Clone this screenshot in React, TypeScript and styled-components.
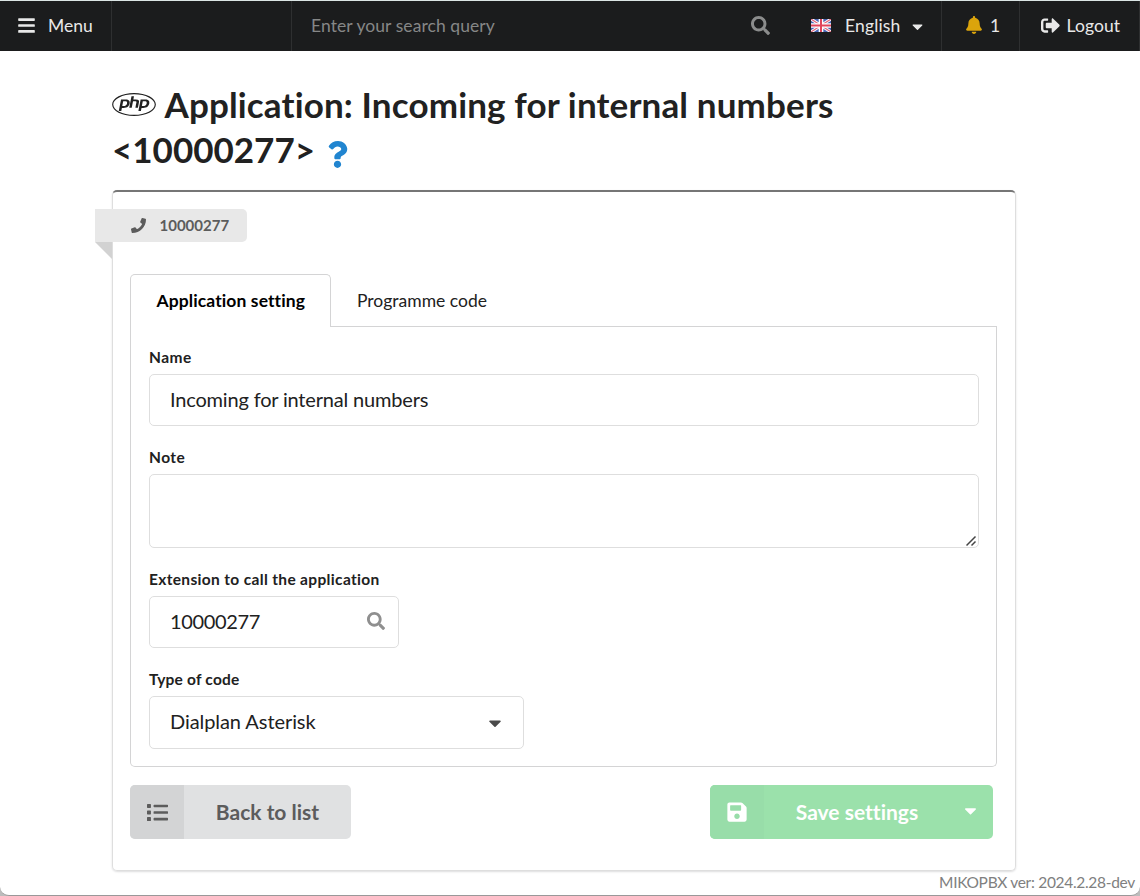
import React from "react";
import styled, { createGlobalStyle } from "styled-components";
import {
  FaBars,
  FaSearch,
  FaCaretDown,
  FaBell,
  FaSignOutAlt,
  FaPhp,
  FaQuestion,
  FaPhone,
  FaList,
  FaSave,
} from "react-icons/fa";

const GlobalStyle = createGlobalStyle`
  *, *::before, *::after { box-sizing: border-box; }
  html, body { margin: 0; padding: 0; background: #bcbcbc; }
  body {
    font-family: Lato, "Liberation Sans", sans-serif;
    font-size: 17.5px;
    font-variant-ligatures: none;
    color: #212121;
    overflow: hidden;
  }
  input, textarea, button { font-family: inherit; font-variant-ligatures: none; }
`;

const Page = styled.div`
  width: 1140px;
  height: 896px;
  background: #fff;
  border-top: 1px solid #dbe5e4;
  border-bottom: 1px solid #9a9899;
  border-radius: 0 0 9px 9px;
  display: flex;
  flex-direction: column;
  overflow: hidden;
`;

const TopBar = styled.header`
  display: flex;
  flex: 0 0 50px;
  background: #1b1c1d;
  color: #e8e8e8;
`;

const BarItem = styled.div<{ $width: number; $divider?: boolean; $left?: number }>`
  width: ${(p) => p.$width}px;
  padding-left: ${(p) => p.$left ?? 0}px;
  padding-bottom: 2px;
  display: flex;
  align-items: center;
  white-space: nowrap;
  border-right: ${(p) => (p.$divider ? "1px solid #2e2f30" : "0")};
`;

const BarText = styled.span<{ $left: number; $spacing?: number }>`
  margin-left: ${(p) => p.$left}px;
  letter-spacing: ${(p) => p.$spacing ?? 0}px;
`;

const SearchInput = styled.input`
  width: 439.5px;
  padding: 0;
  border: 0;
  outline: 0;
  background: transparent;
  font-size: 17.5px;
  letter-spacing: 0.07px;
  color: #fff;
  &::placeholder { color: #868787; opacity: 1; }
`;

const Flag = styled.svg`
  display: block;
  width: 20px;
  height: 13px;
`;

const Container = styled.main`
  width: 904px;
  margin-left: 112px;
  flex: 1;
`;

const Title = styled.h1`
  margin: 31px 0 17px;
  height: 91px;
  font-size: 35px;
  line-height: 45px;
  font-weight: 700;
  color: #212121;
`;

const TitleName = styled.span`
  letter-spacing: 0.14px;
`;

const PhpMark = styled(FaPhp)`
  width: 44px;
  height: 35px;
  margin-right: 8.5px;
  vertical-align: -4px;
`;

const HelpMark = styled(FaQuestion)`
  width: 21px;
  height: 27px;
  margin-left: 11.5px;
  color: #2185d0;
  vertical-align: -5px;
`;

const Segment = styled.section`
  height: 681px;
  padding: 17px 17px 0;
  border: 1px solid #dedede;
  border-top: 2px solid #767676;
  border-radius: 5px;
  box-shadow: 0 1px 2px rgba(34, 36, 38, 0.15);
`;

const Ribbon = styled.div`
  position: relative;
  width: 152px;
  height: 33px;
  margin-left: -35px;
  padding: 0 0 1px 35.5px;
  display: flex;
  align-items: center;
  gap: 14px;
  background: #e8e8e8;
  border-radius: 0 5px 5px 0;
  font-size: 15px;
  font-weight: 700;
  color: #5c5c5c;
  &::after {
    content: "";
    position: absolute;
    left: 0;
    top: 100%;
    border-top: 17px solid #d2d2d2;
    border-left: 17px solid transparent;
  }
`;

const Tabs = styled.nav`
  display: flex;
  width: 867px;
  height: 53px;
  margin-top: 32px;
`;

const Tab = styled.a<{ $active?: boolean }>`
  display: flex;
  align-items: center;
  width: ${(p) => (p.$active ? "201px" : "auto")};
  flex: ${(p) => (p.$active ? "none" : "1")};
  padding: ${(p) => (p.$active ? "0 0 2px 25.5px" : "0 0 0 26px")};
  color: ${(p) => (p.$active ? "#000" : "#212121")};
  font-weight: ${(p) => (p.$active ? 700 : 400)};
  letter-spacing: ${(p) => (p.$active ? "0.1px" : "0")};
  border-style: solid;
  border-color: #d4d4d5;
  border-width: ${(p) => (p.$active ? "1px 1px 0 1px" : "0 0 1px 0")};
  border-radius: ${(p) => (p.$active ? "5px 5px 0 0" : "0")};
`;

const TabPanel = styled.form`
  width: 867px;
  height: 440px;
  padding: 20px 17px 0 18px;
  border: 1px solid #d4d4d5;
  border-top: 0;
  border-radius: 0 0 5px 5px;
`;

const Field = styled.div`
  margin-bottom: 21px;
`;

const Label = styled.label<{ $spacing?: number }>`
  display: block;
  height: 27px;
  line-height: 20px;
  font-size: 15.5px;
  font-weight: 700;
  letter-spacing: ${(p) => p.$spacing ?? 0.34}px;
`;

const Control = styled.div<{ $width: number; $height?: number }>`
  width: ${(p) => p.$width}px;
  height: ${(p) => p.$height ?? 52}px;
  padding: 0 0 2px 20px;
  display: flex;
  align-items: center;
  border: 1px solid #dedede;
  border-radius: 5px;
`;

const TextInput = styled.input<{ $spacing: number }>`
  flex: 1;
  min-width: 0;
  padding: 0;
  border: 0;
  outline: 0;
  background: transparent;
  font-size: 20px;
  letter-spacing: ${(p) => p.$spacing}px;
  color: #212121;
`;

const SelectValue = styled.span`
  flex: 1;
  padding-bottom: 1px;
  font-size: 20px;
  letter-spacing: -0.07px;
`;

const SelectCaret = styled(FaCaretDown)`
  margin: 3px 18px 0 0;
  color: #4a4a4a;
`;

const NoteArea = styled.div`
  width: 830px;
  height: 74px;
  display: flex;
  align-items: flex-end;
  justify-content: flex-end;
  border: 1px solid #dedede;
  border-radius: 5px;
`;

const Actions = styled.div`
  display: flex;
  justify-content: space-between;
  width: 863px;
  margin-top: 18px;
`;

const Button = styled.button<{ $width: number; $green?: boolean }>`
  width: ${(p) => p.$width}px;
  height: 54px;
  padding: 0;
  display: flex;
  align-items: center;
  border: 0;
  border-radius: 5px;
  overflow: hidden;
  font-size: 21px;
  font-weight: 700;
  background: ${(p) => (p.$green ? "#9be1ab" : "#e0e1e2")};
  color: ${(p) => (p.$green ? "#fff" : "#5c5c5c")};
`;

const ButtonIcon = styled.span<{ $green?: boolean }>`
  width: 54px;
  height: 54px;
  display: flex;
  align-items: center;
  justify-content: center;
  background: ${(p) => (p.$green ? "#98dda9" : "#d3d4d5")};
`;

const ButtonText = styled.span<{ $width: number }>`
  width: ${(p) => p.$width}px;
  padding-bottom: 2px;
  text-align: center;
`;

const ButtonCaret = styled(FaCaretDown)`
  margin: 0 0 4px 11px;
`;

const Footer = styled.footer`
  display: flex;
  justify-content: flex-end;
  height: 25px;
  line-height: 23px;
  padding-right: 5px;
  font-size: 15.5px;
  letter-spacing: -0.3px;
  color: #808080;
`;

const UnionJack = () => (
  <Flag viewBox="0 0 60 39" preserveAspectRatio="none">
    <rect width="60" height="39" fill="#4a66b4" />
    <path d="M0 0L60 39M60 0L0 39" stroke="#fff" strokeWidth="9" />
    <path d="M0 0L60 39M60 0L0 39" stroke="#e0657b" strokeWidth="3.4" />
    <path d="M30 0V39M0 19.5H60" stroke="#fff" strokeWidth="14" />
    <path d="M30 0V39M0 19.5H60" stroke="#e0455c" strokeWidth="6" />
  </Flag>
);

const ResizeGrip = () => (
  <svg width="12" height="12" viewBox="0 0 12 12" stroke="#444" strokeWidth="1.5">
    <path d="M0.5 10.5L9.5 1.5M5.5 10.5L9.5 6.5" />
  </svg>
);

export default function App() {
  return (
    <>
      <GlobalStyle />
      <Page>
        <TopBar>
          <BarItem $width={112} $left={17} $divider>
            <FaBars size={19} />
            <BarText $left={12}>Menu</BarText>
          </BarItem>
          <BarItem $width={180} $divider />
          <BarItem $width={499} $left={19}>
            <SearchInput placeholder="Enter your search query" />
            <FaSearch size={19} color="#8b8c8c" />
          </BarItem>
          <BarItem $width={151} $left={20} $divider>
            <UnionJack />
            <BarText $left={14} $spacing={0.15}>English</BarText>
            <FaCaretDown size={17} style={{ marginLeft: 9, marginTop: 2 }} />
          </BarItem>
          <BarItem $width={78} $left={23} $divider>
            <FaBell size={18} color="#dba40c" />
            <BarText $left={7}>1</BarText>
          </BarItem>
          <BarItem $width={120} $left={21} $divider>
            <FaSignOutAlt size={19} />
            <BarText $left={6.5} $spacing={0.1}>Logout</BarText>
          </BarItem>
        </TopBar>
        <Container>
          <Title>
            <PhpMark />
            <TitleName>Application: Incoming for internal numbers</TitleName>
            <br />
            &lt;10000277&gt;
            <HelpMark />
          </Title>
          <Segment>
            <Ribbon>
              <FaPhone size={15} />
              10000277
            </Ribbon>
            <Tabs>
              <Tab $active>Application setting</Tab>
              <Tab>Programme code</Tab>
            </Tabs>
            <TabPanel>
              <Field>
                <Label $spacing={0.5}>Name</Label>
                <Control $width={830}>
                  <TextInput $spacing={-0.18} defaultValue="Incoming for internal numbers" />
                </Control>
              </Field>
              <Field>
                <Label $spacing={0.45}>Note</Label>
                <NoteArea>
                  <ResizeGrip />
                </NoteArea>
              </Field>
              <Field>
                <Label>Extension to call the application</Label>
                <Control $width={250}>
                  <TextInput $spacing={-0.35} defaultValue="10000277" />
                  <FaSearch size={18} color="#8f8f8f" style={{ marginRight: 13 }} />
                </Control>
              </Field>
              <Field>
                <Label $spacing={0.2}>Type of code</Label>
                <Control $width={375} $height={53}>
                  <SelectValue>Dialplan Asterisk</SelectValue>
                  <SelectCaret size={20} />
                </Control>
              </Field>
            </TabPanel>
            <Actions>
              <Button $width={221}>
                <ButtonIcon>
                  <FaList size={21} />
                </ButtonIcon>
                <ButtonText $width={167}>Back to list</ButtonText>
              </Button>
              <Button $width={283} $green>
                <ButtonIcon $green>
                  <FaSave size={22} />
                </ButtonIcon>
                <ButtonText $width={186}>Save settings</ButtonText>
                <ButtonCaret size={19} />
              </Button>
            </Actions>
          </Segment>
        </Container>
        <Footer>MIKOPBX ver: 2024.2.28-dev</Footer>
      </Page>
    </>
  );
}
